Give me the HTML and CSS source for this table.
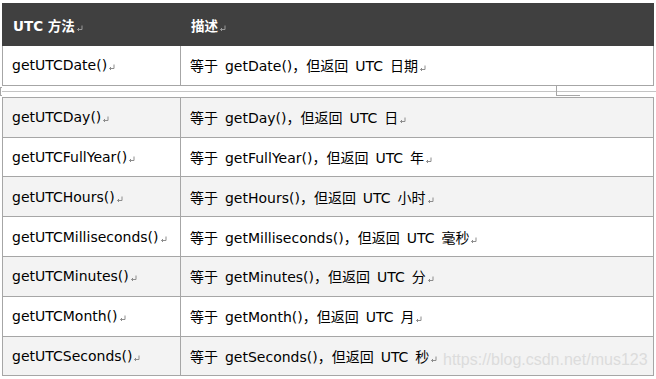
FILE: index.html
```html
<!DOCTYPE html>
<html lang="zh">
<head>
<meta charset="utf-8">
<link rel="stylesheet" href="styles.css">
</head>
<body>
<div class="page">
  <table class="tbl">
    <colgroup><col class="c1"><col class="c2"></colgroup>
    <thead>
      <tr><th>UTC 方法<svg class="ret dark" viewBox="0 0 7 7"><path d="M6 .5V4.5H1.5M3 3L1.5 4.5L3 6"/></svg></th><th>描述<svg class="ret dark" viewBox="0 0 7 7"><path d="M6 .5V4.5H1.5M3 3L1.5 4.5L3 6"/></svg></th></tr>
    </thead>
    <tbody>
      <tr><td>getUTCDate()<svg class="ret" viewBox="0 0 7 7"><path d="M6 .5V4.5H1.5M3 3L1.5 4.5L3 6"/></svg></td><td class="desc">等于 getDate()，但返回 UTC 日期<svg class="ret" viewBox="0 0 7 7"><path d="M6 .5V4.5H1.5M3 3L1.5 4.5L3 6"/></svg></td></tr>
    </tbody>
  </table>
  <div class="gap">
    <span class="bracket"></span>
    <div class="rule"></div>
    <span class="tick"></span>
  </div>
  <table class="tbl">
    <colgroup><col class="c1"><col class="c2"></colgroup>
    <tbody>
      <tr class="alt"><td>getUTCDay()<svg class="ret" viewBox="0 0 7 7"><path d="M6 .5V4.5H1.5M3 3L1.5 4.5L3 6"/></svg></td><td class="desc">等于 getDay()，但返回 UTC 日<svg class="ret" viewBox="0 0 7 7"><path d="M6 .5V4.5H1.5M3 3L1.5 4.5L3 6"/></svg></td></tr>
      <tr><td>getUTCFullYear()<svg class="ret" viewBox="0 0 7 7"><path d="M6 .5V4.5H1.5M3 3L1.5 4.5L3 6"/></svg></td><td class="desc">等于 getFullYear()，但返回 UTC 年<svg class="ret" viewBox="0 0 7 7"><path d="M6 .5V4.5H1.5M3 3L1.5 4.5L3 6"/></svg></td></tr>
      <tr class="alt"><td>getUTCHours()<svg class="ret" viewBox="0 0 7 7"><path d="M6 .5V4.5H1.5M3 3L1.5 4.5L3 6"/></svg></td><td class="desc">等于 getHours()，但返回 UTC 小时<svg class="ret" viewBox="0 0 7 7"><path d="M6 .5V4.5H1.5M3 3L1.5 4.5L3 6"/></svg></td></tr>
      <tr><td>getUTCMilliseconds()<svg class="ret" viewBox="0 0 7 7"><path d="M6 .5V4.5H1.5M3 3L1.5 4.5L3 6"/></svg></td><td class="desc">等于 getMilliseconds()，但返回 UTC 毫秒<svg class="ret" viewBox="0 0 7 7"><path d="M6 .5V4.5H1.5M3 3L1.5 4.5L3 6"/></svg></td></tr>
      <tr class="alt"><td>getUTCMinutes()<svg class="ret" viewBox="0 0 7 7"><path d="M6 .5V4.5H1.5M3 3L1.5 4.5L3 6"/></svg></td><td class="desc">等于 getMinutes()，但返回 UTC 分<svg class="ret" viewBox="0 0 7 7"><path d="M6 .5V4.5H1.5M3 3L1.5 4.5L3 6"/></svg></td></tr>
      <tr><td>getUTCMonth()<svg class="ret" viewBox="0 0 7 7"><path d="M6 .5V4.5H1.5M3 3L1.5 4.5L3 6"/></svg></td><td class="desc">等于 getMonth()，但返回 UTC 月<svg class="ret" viewBox="0 0 7 7"><path d="M6 .5V4.5H1.5M3 3L1.5 4.5L3 6"/></svg></td></tr>
      <tr class="alt"><td>getUTCSeconds()<svg class="ret" viewBox="0 0 7 7"><path d="M6 .5V4.5H1.5M3 3L1.5 4.5L3 6"/></svg></td><td class="desc">等于 getSeconds()，但返回 UTC 秒<svg class="ret" viewBox="0 0 7 7"><path d="M6 .5V4.5H1.5M3 3L1.5 4.5L3 6"/></svg></td></tr>
    </tbody>
  </table>
  <div class="watermark">https://blog.csdn.net/mus123</div>
</div>
</body>
</html>
```

FILE: styles.css
```css
body {
  margin: 0;
  background: #fff;
  font-family: "DejaVu Sans", "Noto Sans CJK SC", sans-serif;
}

.page {
  position: relative;
  width: 656px;
  height: 379px;
  padding-top: 3px;
  box-sizing: border-box;
  overflow: hidden;
}

.tbl {
  border-collapse: collapse;
  table-layout: fixed;
  margin-left: 2px;
  width: 652px;
}

.c1 {
  width: 178px;
}

th {
  background: #404040;
  color: #fff;
  font-weight: bold;
  font-size: 13.5px;
  text-align: left;
  height: 41px;
  padding: 0 0 0 10px;
  border: 1px solid #404040;
}

td {
  font-size: 14px;
  color: #000;
  height: 38.8px;
  padding: 0 0 0 9px;
  border: 1px solid #a6a6a6;
  white-space: nowrap;
}

td.desc {
  word-spacing: 2.5px;
}

tr.alt td {
  background: #f3f3f3;
}

.ret {
  width: 7px;
  height: 7px;
  margin-left: 1px;
  vertical-align: -1px;
  fill: none;
  stroke: #8c8c8c;
  stroke-width: 1;
}

.ret.dark {
  stroke: #9a9a9a;
}

.gap {
  position: relative;
  height: 11px;
  display: flex;
  align-items: center;
  padding-left: 2px;
}

.rule {
  flex: 1;
  height: 1px;
  background: #c4c4c4;
}

.bracket {
  position: absolute;
  left: 0;
  top: 1px;
  width: 2px;
  height: 9px;
  border: 1px solid #a6a6a6;
  border-right: none;
  box-sizing: border-box;
}

.tick {
  position: absolute;
  left: 556px;
  top: -1px;
  width: 24px;
  height: 11px;
  border-left: 1px solid #a6a6a6;
  border-bottom: 1px solid #a6a6a6;
  box-sizing: border-box;
}

.watermark {
  position: absolute;
  left: 443px;
  top: 351px;
  font-family: "Liberation Sans", Arial, sans-serif;
  font-size: 16px;
  color: #dcdcdc;
}
```
